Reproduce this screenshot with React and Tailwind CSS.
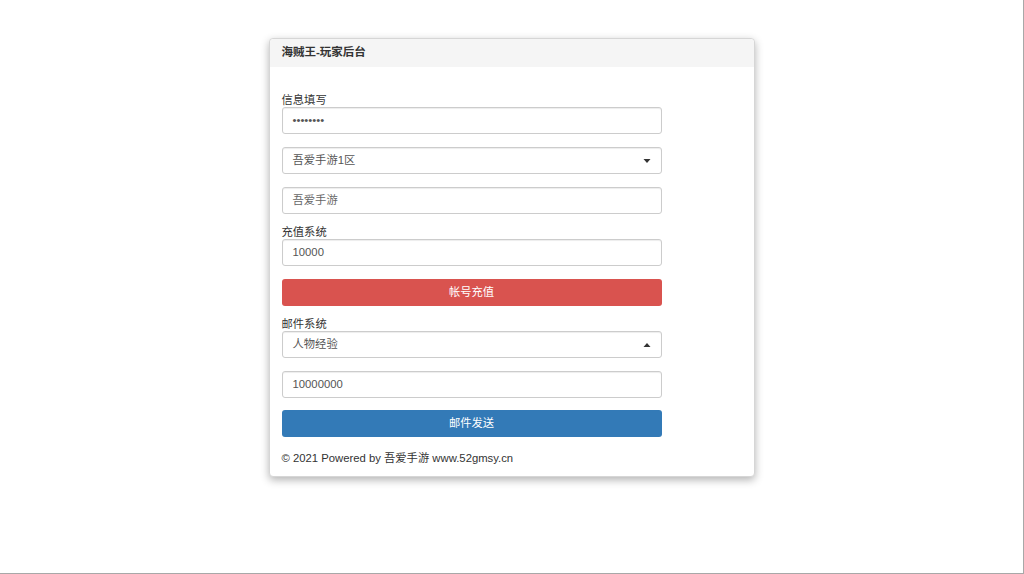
import React from 'react';

const font = { fontFamily: '"Liberation Sans", Arial, "Noto Sans CJK SC", sans-serif' };

const Caret = ({ up }) => (
  <svg width="8" height="5" viewBox="0 0 8 5" className="absolute right-[10px] top-1/2 -translate-y-1/2">
    {up ? <path d="M0.5 4.5 L4 0.5 L7.5 4.5 Z" fill="#333" /> : <path d="M0.5 0.5 L7.5 0.5 L4 4.5 Z" fill="#333" />}
  </svg>
);

const Field = ({ value, select, up, muted }) => (
  <div className="relative w-[380px] h-[27px] border border-[#ccc] rounded-[3px] bg-white flex items-center px-[10px] shadow-[inset_0_1px_1px_rgba(0,0,0,0.075)]">
    <span className={`text-[11.3px] ${muted ? 'text-[#666]' : 'text-[#555]'}`}>{value}</span>
    {select && <Caret up={up} />}
  </div>
);

const Label = ({ children }) => (
  <div className="mt-[12px] text-[11.3px] leading-[13px] text-[#333]">{children}</div>
);

const Button = ({ children, color, gap }) => (
  <div className={`${gap} w-[380px] h-[27px] rounded-[3px] flex items-center justify-center text-white text-[11.3px] ${color}`}>
    {children}
  </div>
);

export default function App() {
  return (
    <div className="w-[1024px] h-[574px] bg-white border-r border-b border-[#a8a8a8] overflow-hidden" style={font}>
      <div className="w-[486px] mx-auto mt-[38px] bg-white border border-[#d6d6d6] rounded-[4px] shadow-[0_3px_8px_rgba(0,0,0,0.3)]">
        <div className="h-[28px] bg-[#f5f5f5] rounded-t-[4px] flex items-center px-[12px]">
          <span className="text-[11.5px] font-bold text-[#333]">海贼王-玩家后台</span>
        </div>
        <div className="px-[12px] pt-[15px] pb-[10px] flex flex-col">
          <Label>信息填写</Label>
          <Field value="••••••••" />
          <div className="mt-[13px]"><Field value="吾爱手游1区" select /></div>
          <div className="mt-[13px]"><Field value="吾爱手游" muted /></div>
          <Label>充值系统</Label>
          <Field value="10000" />
          <Button gap="mt-[13px]" color="bg-[#d9534f]">帐号充值</Button>
          <Label>邮件系统</Label>
          <Field value="人物经验" select up />
          <div className="mt-[13px]"><Field value="10000000" /></div>
          <Button gap="mt-[12px]" color="bg-[#337ab7]">邮件发送</Button>
          <div className="mt-[13px] text-[11.3px] text-[#333] leading-[16px]">© 2021 Powered by 吾爱手游 www.52gmsy.cn</div>
        </div>
      </div>
    </div>
  );
}
